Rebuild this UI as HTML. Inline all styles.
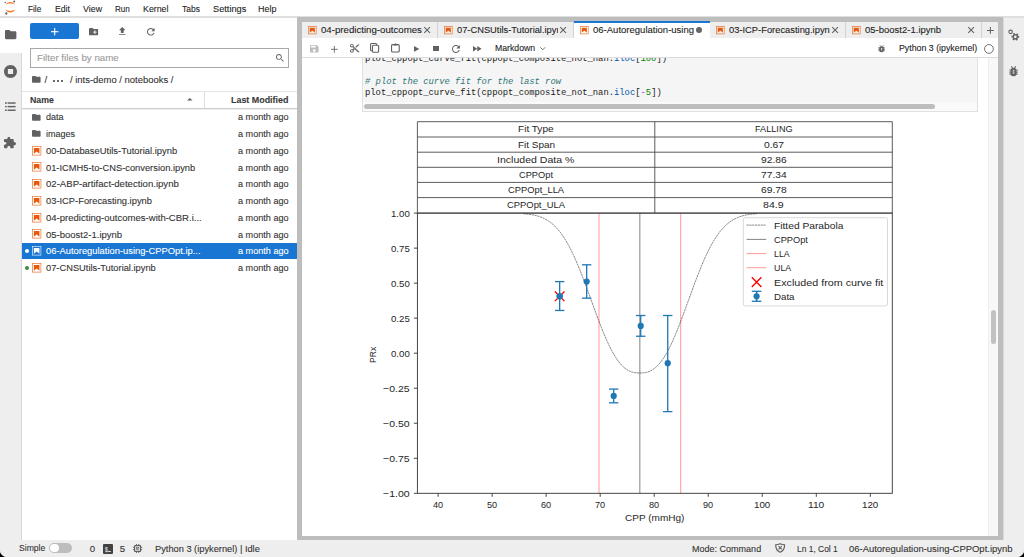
<!DOCTYPE html><html><head><meta charset="utf-8"><title>JupyterLab</title><style>
*{margin:0;padding:0;box-sizing:border-box}
html,body{width:1024px;height:557px;overflow:hidden;background:#000;font-family:"Liberation Sans",sans-serif}
#win{position:absolute;left:0;top:0;width:1024px;height:557px;background:#fff;border-radius:0 0 7px 7px;overflow:hidden}
.t{position:absolute;white-space:nowrap;line-height:0;-webkit-text-stroke:0.1px currentColor}
svg{position:absolute;overflow:visible}
</style></head><body><div id="win">
<div style="position:absolute;left:0px;top:0px;width:1024px;height:17px;background:#fff"></div>
<div style="position:absolute;left:0px;top:16.4px;width:1024px;height:1.4px;background:#dfdfdf"></div>
<div class="t" style="left:28.30px;top:8.70px;font-size:9.7px;color:#1e1e1e;font-family:'Liberation Sans',sans-serif;transform:scaleX(0.8511);transform-origin:0 0;">File</div>
<div class="t" style="left:54.90px;top:8.70px;font-size:9.7px;color:#1e1e1e;font-family:'Liberation Sans',sans-serif;transform:scaleX(0.8915);transform-origin:0 0;">Edit</div>
<div class="t" style="left:82.80px;top:8.70px;font-size:9.7px;color:#1e1e1e;font-family:'Liberation Sans',sans-serif;transform:scaleX(0.9150);transform-origin:0 0;">View</div>
<div class="t" style="left:115.00px;top:8.70px;font-size:9.7px;color:#1e1e1e;font-family:'Liberation Sans',sans-serif;transform:scaleX(0.8319);transform-origin:0 0;">Run</div>
<div class="t" style="left:142.80px;top:8.70px;font-size:9.7px;color:#1e1e1e;font-family:'Liberation Sans',sans-serif;transform:scaleX(0.9093);transform-origin:0 0;">Kernel</div>
<div class="t" style="left:181.60px;top:8.70px;font-size:9.7px;color:#1e1e1e;font-family:'Liberation Sans',sans-serif;transform:scaleX(0.8738);transform-origin:0 0;">Tabs</div>
<div class="t" style="left:212.50px;top:8.70px;font-size:9.7px;color:#1e1e1e;font-family:'Liberation Sans',sans-serif;transform:scaleX(0.9530);transform-origin:0 0;">Settings</div>
<div class="t" style="left:258.40px;top:8.70px;font-size:9.7px;color:#1e1e1e;font-family:'Liberation Sans',sans-serif;transform:scaleX(0.9272);transform-origin:0 0;">Help</div>
<svg style="left:0px;top:0px" width="24" height="17" viewBox="0 0 24 17" preserveAspectRatio="none"><path d="M5.4 4.9 C7.2 0.9 13.4 0.9 15.2 4.9 C12.8 3.0 7.8 3.0 5.4 4.9Z" fill="#f37726"/><path d="M5.4 9.6 C7.2 13.6 13.4 13.6 15.2 9.6 C12.8 11.5 7.8 11.5 5.4 9.6Z" fill="#f37726"/><circle cx="14.2" cy="1.5" r="1.0" fill="#616161"/><circle cx="5.3" cy="2.4" r="0.7" fill="#616161"/><circle cx="6.3" cy="13.5" r="1.15" fill="#616161"/></svg>
<div style="position:absolute;left:0px;top:17px;width:22px;height:523px;background:#eee"></div>
<div style="position:absolute;left:21px;top:53px;width:0.9px;height:487px;background:#d9d9d9"></div>
<div style="position:absolute;left:0px;top:17.1px;width:22px;height:36px;background:#fff"></div>
<svg style="left:4.6px;top:29.8px" width="11.4" height="9.2" viewBox="2 4 20 16" preserveAspectRatio="none"><path d="M10 4H4c-1.1 0-2 .9-2 2v12c0 1.1.9 2 2 2h16c1.1 0 2-.9 2-2V8c0-1.1-.9-2-2-2h-8l-2-2z" fill="#616161"/></svg>
<svg style="left:3.6px;top:64.5px" width="13" height="13" viewBox="2 2 20 20" preserveAspectRatio="none"><path d="M12 2C6.48 2 2 6.48 2 12s4.48 10 10 10 10-4.48 10-10S17.52 2 12 2zm4 14H8V8h8v8z" fill="#616161"/></svg>
<svg style="left:4.6px;top:102.4px" width="10.6" height="9.2" viewBox="0 0 10.6 9.2" preserveAspectRatio="none"><circle cx="0.9" cy="1.0" r="0.9" fill="#616161"/><circle cx="0.9" cy="4.6" r="0.9" fill="#616161"/><circle cx="0.9" cy="8.2" r="0.9" fill="#616161"/><rect x="2.6" y="0.3" width="8" height="1.45" fill="#616161"/><rect x="2.6" y="3.9" width="8" height="1.45" fill="#616161"/><rect x="2.6" y="7.5" width="8" height="1.45" fill="#616161"/></svg>
<svg style="left:4.4px;top:137px" width="12" height="11.2" viewBox="2 0 21 22" preserveAspectRatio="none"><path d="M20.5 10H19V6c0-1.1-.9-2-2-2h-4V2.5C13 1.12 11.88 0 10.5 0S8 1.12 8 2.5V4H4c-1.1 0-1.99.9-1.99 2v3.8H3.5c1.49 0 2.7 1.21 2.7 2.7s-1.21 2.7-2.7 2.7H2V20c0 1.1.9 2 2 2h3.8v-1.5c0-1.49 1.21-2.7 2.7-2.7 1.49 0 2.7 1.21 2.7 2.7V22H17c1.1 0 2-.9 2-2v-4h1.5c1.38 0 2.5-1.12 2.5-2.5S21.88 10 20.5 10z" fill="#616161"/></svg>
<div style="position:absolute;left:22px;top:17.1px;width:275px;height:523px;background:#fff"></div>
<div style="position:absolute;left:30px;top:23px;width:48.6px;height:16px;background:#1976d2;border-radius:2px"></div>
<svg style="left:50.5px;top:27.5px" width="7.4" height="7.4" viewBox="0 0 8 8" preserveAspectRatio="none"><rect x="3.4" y="0" width="1.2" height="8" fill="#fff"/><rect x="0" y="3.4" width="8" height="1.2" fill="#fff"/></svg>
<svg style="left:89px;top:27.7px" width="9.1" height="7.3" viewBox="2 4 20 16" preserveAspectRatio="none"><path d="M20 6h-8l-2-2H4c-1.1 0-2 .9-2 2v12c0 1.1.9 2 2 2h16c1.1 0 2-.9 2-2V8c0-1.1-.9-2-2-2zm-1 8h-3v3h-2v-3h-3v-2h3V9h2v3h3v2z" fill="#616161"/></svg>
<svg style="left:118.7px;top:27.4px" width="6.5" height="7.8" viewBox="5 3 14 17" preserveAspectRatio="none"><path d="M9 16h6v-6h4l-7-7-7 7h4zm-4 2h14v2H5z" fill="#616161"/></svg>
<svg style="left:146.8px;top:27.6px" width="7.6" height="7.6" viewBox="4 4 16 16" preserveAspectRatio="none"><path d="M17.65 6.35C16.2 4.9 14.21 4 12 4c-4.42 0-7.99 3.58-7.99 8s3.57 8 7.99 8c3.73 0 6.84-2.55 7.73-6h-2.08c-.82 2.33-3.04 4-5.65 4-3.31 0-6-2.69-6-6s2.69-6 6-6c1.66 0 3.14.69 4.22 1.78L13 11h7V4l-2.35 2.35z" fill="#616161"/></svg>
<div style="position:absolute;left:30px;top:48.2px;width:259px;height:20.3px;border:0.9px solid #a8a8a8;background:#fff"></div>
<div class="t" style="left:36.90px;top:57.70px;font-size:9.6px;color:#9a9a9a;font-family:'Liberation Sans',sans-serif;transform:scaleX(1.0154);transform-origin:0 0;">Filter files by name</div>
<svg style="left:275.6px;top:53.6px" width="8" height="8" viewBox="3 3 18 18" preserveAspectRatio="none"><path d="M15.5 14h-.79l-.28-.27C15.41 12.59 16 11.11 16 9.5 16 5.91 13.09 3 9.5 3S3 5.91 3 9.5 5.91 16 9.5 16c1.61 0 3.09-.59 4.23-1.57l.27.28v.79l5 4.99L20.49 19l-4.99-5zm-6 0C7.01 14 5 11.99 5 9.5S7.01 5 9.5 5 14 7.01 14 9.5 11.99 14 9.5 14z" fill="#616161"/></svg>
<svg style="left:32.2px;top:76.4px" width="8.6" height="6.8" viewBox="2 4 20 16" preserveAspectRatio="none"><path d="M10 4H4c-1.1 0-2 .9-2 2v12c0 1.1.9 2 2 2h16c1.1 0 2-.9 2-2V8c0-1.1-.9-2-2-2h-8l-2-2z" fill="#616161"/></svg>
<div class="t" style="left:44.60px;top:79.70px;font-size:9.6px;color:#333;font-family:'Liberation Sans',sans-serif;">/</div>
<div style="position:absolute;left:53.4px;top:79.5px;width:2.0px;height:2.0px;background:#3a3a3a;border-radius:50%"></div>
<div style="position:absolute;left:57.2px;top:79.5px;width:2.0px;height:2.0px;background:#3a3a3a;border-radius:50%"></div>
<div style="position:absolute;left:61.0px;top:79.5px;width:2.0px;height:2.0px;background:#3a3a3a;border-radius:50%"></div>
<div class="t" style="left:69.50px;top:79.70px;font-size:9.6px;color:#333;font-family:'Liberation Sans',sans-serif;transform:scaleX(0.9846);transform-origin:0 0;">/ ints-demo / notebooks /</div>
<div style="position:absolute;left:22px;top:91.2px;width:275px;height:0.9px;background:#e6e6e6"></div>
<div class="t" style="left:30.40px;top:99.70px;font-size:9.7px;color:#3a3a3a;font-family:'Liberation Sans',sans-serif;font-weight:bold;transform:scaleX(0.9045);transform-origin:0 0;">Name</div>
<svg style="left:186.6px;top:98.3px" width="5.6" height="2.6" viewBox="0 0 5.6 2.6" preserveAspectRatio="none"><path d="M0 2.6L2.8 0L5.6 2.6Z" fill="#616161"/></svg>
<div style="position:absolute;left:204.4px;top:91.5px;width:0.9px;height:16.5px;background:#e0e0e0"></div>
<div class="t" style="left:231.40px;top:99.70px;font-size:9.7px;color:#3a3a3a;font-family:'Liberation Sans',sans-serif;font-weight:bold;transform:scaleX(0.9199);transform-origin:0 0;">Last Modified</div>
<div style="position:absolute;left:22px;top:107.5px;width:275px;height:1px;background:#cccccc"></div>
<div style="position:absolute;left:22px;top:108.5px;width:275px;height:1px;background:#f0f0f0"></div>
<svg style="left:32.3px;top:113.6px" width="8.6" height="6.8" viewBox="2 4 20 16" preserveAspectRatio="none"><path d="M10 4H4c-1.1 0-2 .9-2 2v12c0 1.1.9 2 2 2h16c1.1 0 2-.9 2-2V8c0-1.1-.9-2-2-2h-8l-2-2z" fill="#616161"/></svg>
<div class="t" style="left:46.40px;top:116.70px;font-size:9.7px;color:#333;font-family:'Liberation Sans',sans-serif;transform:scaleX(0.9319);transform-origin:0 0;">data</div>
<div class="t" style="left:238.00px;top:116.70px;font-size:9.7px;color:#333;font-family:'Liberation Sans',sans-serif;transform:scaleX(0.9401);transform-origin:0 0;">a month ago</div>
<svg style="left:32.3px;top:130.35px" width="8.6" height="6.8" viewBox="2 4 20 16" preserveAspectRatio="none"><path d="M10 4H4c-1.1 0-2 .9-2 2v12c0 1.1.9 2 2 2h16c1.1 0 2-.9 2-2V8c0-1.1-.9-2-2-2h-8l-2-2z" fill="#616161"/></svg>
<div class="t" style="left:46.40px;top:133.70px;font-size:9.7px;color:#333;font-family:'Liberation Sans',sans-serif;transform:scaleX(0.9273);transform-origin:0 0;">images</div>
<div class="t" style="left:238.00px;top:133.70px;font-size:9.7px;color:#333;font-family:'Liberation Sans',sans-serif;transform:scaleX(0.9401);transform-origin:0 0;">a month ago</div>
<svg style="left:31.9px;top:145.7px" width="9.3" height="9.6" viewBox="1.8 1.8 18.4 18.4" preserveAspectRatio="none"><path d="M18.7 3.3v15.4H3.3V3.3h15.4m1.5-1.5H1.8v18.3h18.3l.1-18.3z" fill="#e8590c" opacity="0.8"/><path d="M16.5 16.5l-5.4-4.3-5.6 4.3v-11h11z" fill="#e8590c"/></svg>
<div class="t" style="left:46.40px;top:150.70px;font-size:9.7px;color:#333;font-family:'Liberation Sans',sans-serif;transform:scaleX(0.9690);transform-origin:0 0;">00-DatabaseUtils-Tutorial.ipynb</div>
<div class="t" style="left:238.00px;top:150.70px;font-size:9.7px;color:#333;font-family:'Liberation Sans',sans-serif;transform:scaleX(0.9401);transform-origin:0 0;">a month ago</div>
<svg style="left:31.9px;top:162.45px" width="9.3" height="9.6" viewBox="1.8 1.8 18.4 18.4" preserveAspectRatio="none"><path d="M18.7 3.3v15.4H3.3V3.3h15.4m1.5-1.5H1.8v18.3h18.3l.1-18.3z" fill="#e8590c" opacity="0.8"/><path d="M16.5 16.5l-5.4-4.3-5.6 4.3v-11h11z" fill="#e8590c"/></svg>
<div class="t" style="left:46.40px;top:167.70px;font-size:9.7px;color:#333;font-family:'Liberation Sans',sans-serif;transform:scaleX(0.9623);transform-origin:0 0;">01-ICMH5-to-CNS-conversion.ipynb</div>
<div class="t" style="left:238.00px;top:167.70px;font-size:9.7px;color:#333;font-family:'Liberation Sans',sans-serif;transform:scaleX(0.9401);transform-origin:0 0;">a month ago</div>
<svg style="left:31.9px;top:179.2px" width="9.3" height="9.6" viewBox="1.8 1.8 18.4 18.4" preserveAspectRatio="none"><path d="M18.7 3.3v15.4H3.3V3.3h15.4m1.5-1.5H1.8v18.3h18.3l.1-18.3z" fill="#e8590c" opacity="0.8"/><path d="M16.5 16.5l-5.4-4.3-5.6 4.3v-11h11z" fill="#e8590c"/></svg>
<div class="t" style="left:46.40px;top:183.70px;font-size:9.7px;color:#333;font-family:'Liberation Sans',sans-serif;transform:scaleX(0.9907);transform-origin:0 0;">02-ABP-artifact-detection.ipynb</div>
<div class="t" style="left:238.00px;top:183.70px;font-size:9.7px;color:#333;font-family:'Liberation Sans',sans-serif;transform:scaleX(0.9401);transform-origin:0 0;">a month ago</div>
<svg style="left:31.9px;top:195.95px" width="9.3" height="9.6" viewBox="1.8 1.8 18.4 18.4" preserveAspectRatio="none"><path d="M18.7 3.3v15.4H3.3V3.3h15.4m1.5-1.5H1.8v18.3h18.3l.1-18.3z" fill="#e8590c" opacity="0.8"/><path d="M16.5 16.5l-5.4-4.3-5.6 4.3v-11h11z" fill="#e8590c"/></svg>
<div class="t" style="left:46.40px;top:200.70px;font-size:9.7px;color:#333;font-family:'Liberation Sans',sans-serif;transform:scaleX(0.9647);transform-origin:0 0;">03-ICP-Forecasting.ipynb</div>
<div class="t" style="left:238.00px;top:200.70px;font-size:9.7px;color:#333;font-family:'Liberation Sans',sans-serif;transform:scaleX(0.9401);transform-origin:0 0;">a month ago</div>
<svg style="left:31.9px;top:212.7px" width="9.3" height="9.6" viewBox="1.8 1.8 18.4 18.4" preserveAspectRatio="none"><path d="M18.7 3.3v15.4H3.3V3.3h15.4m1.5-1.5H1.8v18.3h18.3l.1-18.3z" fill="#e8590c" opacity="0.8"/><path d="M16.5 16.5l-5.4-4.3-5.6 4.3v-11h11z" fill="#e8590c"/></svg>
<div class="t" style="left:46.40px;top:217.70px;font-size:9.7px;color:#333;font-family:'Liberation Sans',sans-serif;transform:scaleX(0.9837);transform-origin:0 0;">04-predicting-outcomes-with-CBR.i...</div>
<div class="t" style="left:238.00px;top:217.70px;font-size:9.7px;color:#333;font-family:'Liberation Sans',sans-serif;transform:scaleX(0.9401);transform-origin:0 0;">a month ago</div>
<svg style="left:31.9px;top:229.45px" width="9.3" height="9.6" viewBox="1.8 1.8 18.4 18.4" preserveAspectRatio="none"><path d="M18.7 3.3v15.4H3.3V3.3h15.4m1.5-1.5H1.8v18.3h18.3l.1-18.3z" fill="#e8590c" opacity="0.8"/><path d="M16.5 16.5l-5.4-4.3-5.6 4.3v-11h11z" fill="#e8590c"/></svg>
<div class="t" style="left:46.40px;top:234.70px;font-size:9.7px;color:#333;font-family:'Liberation Sans',sans-serif;transform:scaleX(0.9813);transform-origin:0 0;">05-boost2-1.ipynb</div>
<div class="t" style="left:238.00px;top:234.70px;font-size:9.7px;color:#333;font-family:'Liberation Sans',sans-serif;transform:scaleX(0.9401);transform-origin:0 0;">a month ago</div>
<div style="position:absolute;left:22px;top:242.7px;width:275px;height:16.6px;background:#1976d2"></div>
<div style="position:absolute;left:24.9px;top:248.9px;width:4.2px;height:4.2px;background:#fff;border-radius:50%"></div>
<svg style="left:31.9px;top:246.2px" width="9.3" height="9.6" viewBox="1.8 1.8 18.4 18.4" preserveAspectRatio="none"><path d="M18.7 3.3v15.4H3.3V3.3h15.4m1.5-1.5H1.8v18.3h18.3l.1-18.3z" fill="#fff" opacity="0.8"/><path d="M16.5 16.5l-5.4-4.3-5.6 4.3v-11h11z" fill="#fff"/></svg>
<div class="t" style="left:46.40px;top:250.70px;font-size:9.7px;color:#fff;font-family:'Liberation Sans',sans-serif;transform:scaleX(0.9660);transform-origin:0 0;">06-Autoregulation-using-CPPOpt.ip...</div>
<div class="t" style="left:238.00px;top:250.70px;font-size:9.7px;color:#fff;font-family:'Liberation Sans',sans-serif;transform:scaleX(0.9401);transform-origin:0 0;">a month ago</div>
<div style="position:absolute;left:24.9px;top:265.65px;width:4.2px;height:4.2px;background:#388e3c;border-radius:50%"></div>
<svg style="left:31.9px;top:262.95px" width="9.3" height="9.6" viewBox="1.8 1.8 18.4 18.4" preserveAspectRatio="none"><path d="M18.7 3.3v15.4H3.3V3.3h15.4m1.5-1.5H1.8v18.3h18.3l.1-18.3z" fill="#e8590c" opacity="0.8"/><path d="M16.5 16.5l-5.4-4.3-5.6 4.3v-11h11z" fill="#e8590c"/></svg>
<div class="t" style="left:46.40px;top:267.70px;font-size:9.7px;color:#333;font-family:'Liberation Sans',sans-serif;transform:scaleX(0.9602);transform-origin:0 0;">07-CNSUtils-Tutorial.ipynb</div>
<div class="t" style="left:238.00px;top:267.70px;font-size:9.7px;color:#333;font-family:'Liberation Sans',sans-serif;transform:scaleX(0.9401);transform-origin:0 0;">a month ago</div>
<div style="position:absolute;left:297px;top:17.1px;width:706px;height:523px;background:#bdbdbd"></div>
<div style="position:absolute;left:1003px;top:17.1px;width:21px;height:523px;background:#eee"></div>
<div style="position:absolute;left:1003px;top:17.1px;width:0.9px;height:523px;background:#d9d9d9"></div>
<svg style="left:1004px;top:26px" width="18" height="18" viewBox="0 0 18 18" preserveAspectRatio="none"><circle cx="6.6" cy="5.8" r="1.75" fill="none" stroke="#616161" stroke-width="1.15"/><circle cx="11.3" cy="10.8" r="2.15" fill="none" stroke="#616161" stroke-width="1.5"/><circle cx="11.3" cy="10.8" r="3.25" fill="none" stroke="#616161" stroke-width="1.3" stroke-dasharray="1.7 1.7" transform="rotate(-15 11.3 10.8)"/></svg>
<svg style="left:1009.2px;top:65.6px" width="9.1" height="10.6" viewBox="0 0 10 11" preserveAspectRatio="none"><path d="M2.6 0.3L3.9 2.2M7.4 0.3L6.1 2.2" stroke="#616161" stroke-width="1.1"/><path d="M0.4 4.2H9.6M0.4 6.3H9.6M0.6 8.4H9.4" stroke="#616161" stroke-width="1.2"/><rect x="1.9" y="1.8" width="6.2" height="8.9" rx="2.6" fill="#616161"/><rect x="4.1" y="4.4" width="1.8" height="1.3" fill="#eee"/><rect x="4.1" y="6.6" width="1.8" height="1.3" fill="#eee"/></svg>
<div style="position:absolute;left:302px;top:22px;width:696px;height:16.6px;background:#eeeeee"></div>
<div style="position:absolute;left:437.2px;top:22px;width:0.9px;height:16.6px;background:#d2d2d2"></div>
<div style="position:absolute;left:302px;top:37.7px;width:136px;height:0.9px;background:#dcdcdc"></div>
<svg style="left:308.3px;top:25.8px" width="8.6" height="8.2" viewBox="1.8 1.8 18.4 18.4" preserveAspectRatio="none"><path d="M18.7 3.3v15.4H3.3V3.3h15.4m1.5-1.5H1.8v18.3h18.3l.1-18.3z" fill="#e8590c" opacity="0.8"/><path d="M16.5 16.5l-5.4-4.3-5.6 4.3v-11h11z" fill="#e8590c"/></svg>
<div style="position:absolute;left:318px;top:22px;width:103.8px;height:16px;overflow:hidden">
<div class="t" style="left:2.50px;top:7.70px;font-size:9.7px;color:#1e1e1e;font-family:'Liberation Sans',sans-serif;transform:scaleX(0.9964);transform-origin:0 0;">04-predicting-outcomes</div>
</div>
<svg style="left:423.8px;top:27px" width="6.2" height="6" viewBox="0 0 6 6" preserveAspectRatio="none"><path d="M0.2 0.2L5.8 5.8M5.8 0.2L0.2 5.8" stroke="#616161" stroke-width="1.05"/></svg>
<div style="position:absolute;left:573.2px;top:22px;width:0.9px;height:16.6px;background:#d2d2d2"></div>
<div style="position:absolute;left:438px;top:37.7px;width:136px;height:0.9px;background:#dcdcdc"></div>
<svg style="left:444.3px;top:25.8px" width="8.6" height="8.2" viewBox="1.8 1.8 18.4 18.4" preserveAspectRatio="none"><path d="M18.7 3.3v15.4H3.3V3.3h15.4m1.5-1.5H1.8v18.3h18.3l.1-18.3z" fill="#e8590c" opacity="0.8"/><path d="M16.5 16.5l-5.4-4.3-5.6 4.3v-11h11z" fill="#e8590c"/></svg>
<div style="position:absolute;left:454px;top:22px;width:103.8px;height:16px;overflow:hidden">
<div class="t" style="left:2.50px;top:7.70px;font-size:9.7px;color:#1e1e1e;font-family:'Liberation Sans',sans-serif;transform:scaleX(0.9602);transform-origin:0 0;">07-CNSUtils-Tutorial.ipynb</div>
</div>
<svg style="left:559.8px;top:27px" width="6.2" height="6" viewBox="0 0 6 6" preserveAspectRatio="none"><path d="M0.2 0.2L5.8 5.8M5.8 0.2L0.2 5.8" stroke="#616161" stroke-width="1.05"/></svg>
<div style="position:absolute;left:574px;top:22px;width:136px;height:16.6px;background:#fff"></div>
<div style="position:absolute;left:574px;top:21.4px;width:136px;height:1.8px;background:#1976d2"></div>
<svg style="left:580.3px;top:25.8px" width="8.6" height="8.2" viewBox="1.8 1.8 18.4 18.4" preserveAspectRatio="none"><path d="M18.7 3.3v15.4H3.3V3.3h15.4m1.5-1.5H1.8v18.3h18.3l.1-18.3z" fill="#e8590c" opacity="0.8"/><path d="M16.5 16.5l-5.4-4.3-5.6 4.3v-11h11z" fill="#e8590c"/></svg>
<div style="position:absolute;left:590px;top:22px;width:103.8px;height:16px;overflow:hidden">
<div class="t" style="left:2.50px;top:7.70px;font-size:9.7px;color:#1e1e1e;font-family:'Liberation Sans',sans-serif;transform:scaleX(0.9826);transform-origin:0 0;">06-Autoregulation-using</div>
</div>
<div style="position:absolute;left:695.9px;top:27.3px;width:6.2px;height:6.2px;background:#666;border-radius:50%"></div>
<div style="position:absolute;left:845.2px;top:22px;width:0.9px;height:16.6px;background:#d2d2d2"></div>
<div style="position:absolute;left:710px;top:37.7px;width:136px;height:0.9px;background:#dcdcdc"></div>
<svg style="left:716.3px;top:25.8px" width="8.6" height="8.2" viewBox="1.8 1.8 18.4 18.4" preserveAspectRatio="none"><path d="M18.7 3.3v15.4H3.3V3.3h15.4m1.5-1.5H1.8v18.3h18.3l.1-18.3z" fill="#e8590c" opacity="0.8"/><path d="M16.5 16.5l-5.4-4.3-5.6 4.3v-11h11z" fill="#e8590c"/></svg>
<div style="position:absolute;left:726px;top:22px;width:103.8px;height:16px;overflow:hidden">
<div class="t" style="left:2.50px;top:7.70px;font-size:9.7px;color:#1e1e1e;font-family:'Liberation Sans',sans-serif;transform:scaleX(0.9647);transform-origin:0 0;">03-ICP-Forecasting.ipynb</div>
</div>
<svg style="left:831.8px;top:27px" width="6.2" height="6" viewBox="0 0 6 6" preserveAspectRatio="none"><path d="M0.2 0.2L5.8 5.8M5.8 0.2L0.2 5.8" stroke="#616161" stroke-width="1.05"/></svg>
<div style="position:absolute;left:981.2px;top:22px;width:0.9px;height:16.6px;background:#d2d2d2"></div>
<div style="position:absolute;left:846px;top:37.7px;width:136px;height:0.9px;background:#dcdcdc"></div>
<svg style="left:852.3px;top:25.8px" width="8.6" height="8.2" viewBox="1.8 1.8 18.4 18.4" preserveAspectRatio="none"><path d="M18.7 3.3v15.4H3.3V3.3h15.4m1.5-1.5H1.8v18.3h18.3l.1-18.3z" fill="#e8590c" opacity="0.8"/><path d="M16.5 16.5l-5.4-4.3-5.6 4.3v-11h11z" fill="#e8590c"/></svg>
<div style="position:absolute;left:862px;top:22px;width:103.8px;height:16px;overflow:hidden">
<div class="t" style="left:2.50px;top:7.70px;font-size:9.7px;color:#1e1e1e;font-family:'Liberation Sans',sans-serif;transform:scaleX(0.9813);transform-origin:0 0;">05-boost2-1.ipynb</div>
</div>
<svg style="left:967.8px;top:27px" width="6.2" height="6" viewBox="0 0 6 6" preserveAspectRatio="none"><path d="M0.2 0.2L5.8 5.8M5.8 0.2L0.2 5.8" stroke="#616161" stroke-width="1.05"/></svg>
<div style="position:absolute;left:981.3px;top:22px;width:0.9px;height:16.6px;background:#d2d2d2"></div>
<svg style="left:986.8px;top:26.9px" width="6.8" height="6.8" viewBox="0 0 7 7" preserveAspectRatio="none"><path d="M3.5 0V7M0 3.5H7" stroke="#616161" stroke-width="1.05"/></svg>
<div style="position:absolute;left:302px;top:38px;width:696px;height:498px;background:#fff"></div>
<div style="position:absolute;left:302px;top:57.5px;width:696px;height:478.5px;overflow:hidden">
<div style="position:absolute;left:59.60000000000002px;top:-37.5px;width:616.3px;height:91.8px;background:#f5f5f5;border:0.9px solid #e0e0e0"></div>
<div style="position:absolute;left:60.5px;top:44.099999999999994px;width:614.5px;height:9.4px;background:#fafafa"></div>
<div style="position:absolute;left:62.39999999999998px;top:46.099999999999994px;width:570.8px;height:5.3px;background:#bdbdbd;border-radius:3px"></div>
<div class="t" style="left:63.00px;top:1.20px;font-size:8.83px;color:#000;font-family:'Liberation Mono',monospace;-webkit-text-stroke:0;"><span style="color:#1a1a1a;">plot_cppopt_curve_fit(cppopt_composite_not_nan.</span><span style="color:#0055aa;">iloc</span><span style="color:#212121;">[</span><span style="color:#008000;">100</span><span style="color:#212121;">])</span></div>
<div class="t" style="left:63.00px;top:24.20px;font-size:8.83px;color:#000;font-family:'Liberation Mono',monospace;-webkit-text-stroke:0;"><span style="color:#2f7575;font-style:italic;"># plot the curve fit for the last row</span></div>
<div class="t" style="left:63.00px;top:35.20px;font-size:8.83px;color:#000;font-family:'Liberation Mono',monospace;-webkit-text-stroke:0;"><span style="color:#1a1a1a;">plot_cppopt_curve_fit(cppopt_composite_not_nan.</span><span style="color:#0055aa;">iloc</span><span style="color:#212121;">[</span><span style="color:#aa22ff;">-</span><span style="color:#008000;">5</span><span style="color:#212121;">])</span></div>
</div>
<div style="position:absolute;left:988.1px;top:57.5px;width:9.9px;height:478.5px;background:#f8f8f8;border-left:0.6px solid #efefef"></div>
<div style="position:absolute;left:990.8px;top:310.2px;width:5.4px;height:33.8px;background:#c1c1c1;border-radius:3px"></div>
<div style="position:absolute;left:302px;top:38.6px;width:696px;height:18.2px;background:#fff"></div>
<div style="position:absolute;left:302px;top:56.6px;width:696px;height:0.9px;background:#dcdcdc"></div>
<svg style="left:309.6px;top:45px" width="8.6" height="7.6" viewBox="3 3 18 18" preserveAspectRatio="none"><path d="M17 3H5c-1.11 0-2 .9-2 2v14c0 1.1.89 2 2 2h14c1.1 0 2-.9 2-2V7l-4-4zm-5 16c-1.66 0-3-1.34-3-3s1.34-3 3-3 3 1.34 3 3-1.34 3-3 3zm3-10H5V5h10v4z" fill="#bdbdbd"/></svg>
<svg style="left:331px;top:45.5px" width="6.7" height="6.7" viewBox="0 0 7 7" preserveAspectRatio="none"><path d="M3.5 0V7M0 3.5H7" stroke="#616161" stroke-width="0.9"/></svg>
<svg style="left:349.8px;top:44.4px" width="9.4" height="8.6" viewBox="2 2 20 20" preserveAspectRatio="none"><path d="M9.64 7.64c.23-.5.36-1.05.36-1.64 0-2.21-1.79-4-4-4S2 3.79 2 6s1.79 4 4 4c.59 0 1.14-.13 1.64-.36L10 12l-2.36 2.36C7.14 14.13 6.59 14 6 14c-2.21 0-4 1.79-4 4s1.79 4 4 4 4-1.79 4-4c0-.59-.13-1.14-.36-1.64L12 14l7 7h3v-1L9.64 7.64zM6 8c-1.1 0-2-.89-2-2s.9-2 2-2 2 .89 2 2-.9 2-2 2zm0 12c-1.1 0-2-.89-2-2s.9-2 2-2 2 .89 2 2-.9 2-2 2zm6-7.5c-.28 0-.5-.22-.5-.5s.22-.5.5-.5.5.22.5.5-.22.5-.5.5zM19 3l-6 6 2 2 7-7V3z" fill="#616161"/></svg>
<svg style="left:370.1px;top:43.4px" width="9.2" height="9.8" viewBox="0 0 9.2 9.8" preserveAspectRatio="none"><rect x="0.55" y="0.55" width="6.2" height="7.2" rx="1" fill="#fff" stroke="#616161" stroke-width="1.1"/><rect x="2.5" y="2.2" width="6.15" height="7.05" rx="1" fill="#fff" stroke="#616161" stroke-width="1.1"/></svg>
<svg style="left:391.2px;top:43.2px" width="8.8" height="9.6" viewBox="0 0 8.8 9.6" preserveAspectRatio="none"><rect x="0.55" y="1.6" width="7.7" height="7.45" rx="1" fill="none" stroke="#616161" stroke-width="1.1"/><path d="M2.5 2.6V1.6H3.5Q3.8 0.3 4.4 0.3Q5 0.3 5.3 1.6H6.3V2.6Z" fill="#616161"/></svg>
<svg style="left:413.8px;top:45.5px" width="5.3" height="5.8" viewBox="0 0 5.3 5.8" preserveAspectRatio="none"><path d="M0 0L5.3 2.9L0 5.8Z" fill="#616161"/></svg>
<div style="position:absolute;left:433.4px;top:45.8px;width:5.6px;height:5.5px;background:#616161"></div>
<svg style="left:452.3px;top:45.2px" width="7.9" height="7.9" viewBox="4 4 16 16" preserveAspectRatio="none"><path d="M17.65 6.35C16.2 4.9 14.21 4 12 4c-4.42 0-7.99 3.58-7.99 8s3.57 8 7.99 8c3.73 0 6.84-2.55 7.73-6h-2.08c-.82 2.33-3.04 4-5.65 4-3.31 0-6-2.69-6-6s2.69-6 6-6c1.66 0 3.14.69 4.22 1.78L13 11h7V4l-2.35 2.35z" fill="#616161"/></svg>
<svg style="left:472.7px;top:45.8px" width="8.6" height="5.5" viewBox="0 0 8.6 5.5" preserveAspectRatio="none"><path d="M0 0L4.3 2.75L0 5.5ZM4.3 0L8.6 2.75L4.3 5.5Z" fill="#616161"/></svg>
<div class="t" style="left:494.60px;top:47.70px;font-size:9.6px;color:#222;font-family:'Liberation Sans',sans-serif;transform:scaleX(0.9055);transform-origin:0 0;">Markdown</div>
<svg style="left:539.8px;top:47.4px" width="5.5" height="3.2" viewBox="0 0 5.5 3.2" preserveAspectRatio="none"><path d="M0.3 0.3L2.75 2.8L5.2 0.3" fill="none" stroke="#616161" stroke-width="0.9"/></svg>
<svg style="left:878.3px;top:44.6px" width="7.2" height="7.4" viewBox="0 0 10 11" preserveAspectRatio="none"><path d="M2.6 0.3L3.9 2.2M7.4 0.3L6.1 2.2" stroke="#616161" stroke-width="1.1"/><path d="M0.4 4.2H9.6M0.4 6.3H9.6M0.6 8.4H9.4" stroke="#616161" stroke-width="1.2"/><rect x="1.9" y="1.8" width="6.2" height="8.9" rx="2.6" fill="#616161"/><rect x="4.1" y="4.4" width="1.8" height="1.3" fill="#fff"/><rect x="4.1" y="6.6" width="1.8" height="1.3" fill="#fff"/></svg>
<div class="t" style="left:898.70px;top:47.70px;font-size:9.6px;color:#222;font-family:'Liberation Sans',sans-serif;transform:scaleX(0.9172);transform-origin:0 0;">Python 3 (ipykernel)</div>
<svg style="left:983.8px;top:43.8px" width="9.9" height="9.9" viewBox="0 0 10 10" preserveAspectRatio="none"><circle cx="5" cy="5" r="4.45" fill="none" stroke="#616161" stroke-width="0.9"/></svg>
<svg style="left:0px;top:0px" width="1024" height="557" viewBox="0 0 1024 557" preserveAspectRatio="none"><line x1="417.4" y1="121.7" x2="892.3" y2="121.7" stroke="#4a4a4a" stroke-width="0.9"/><line x1="417.4" y1="137.0" x2="892.3" y2="137.0" stroke="#4a4a4a" stroke-width="0.9"/><line x1="417.4" y1="152.2" x2="892.3" y2="152.2" stroke="#4a4a4a" stroke-width="0.9"/><line x1="417.4" y1="167.3" x2="892.3" y2="167.3" stroke="#4a4a4a" stroke-width="0.9"/><line x1="417.4" y1="182.4" x2="892.3" y2="182.4" stroke="#4a4a4a" stroke-width="0.9"/><line x1="417.4" y1="197.6" x2="892.3" y2="197.6" stroke="#4a4a4a" stroke-width="0.9"/><line x1="417.4" y1="213.1" x2="892.3" y2="213.1" stroke="#4a4a4a" stroke-width="0.9"/><line x1="417.4" y1="121.7" x2="417.4" y2="213.1" stroke="#4a4a4a" stroke-width="0.9"/><line x1="654.8" y1="121.7" x2="654.8" y2="213.1" stroke="#4a4a4a" stroke-width="0.9"/><line x1="892.3" y1="121.7" x2="892.3" y2="213.1" stroke="#4a4a4a" stroke-width="0.9"/><line x1="599.00" y1="213.1" x2="599.00" y2="493.3" stroke="#ff0000" stroke-opacity="0.45" stroke-width="0.9"/><line x1="680.69" y1="213.1" x2="680.69" y2="493.3" stroke="#ff0000" stroke-opacity="0.45" stroke-width="0.9"/><line x1="639.85" y1="213.1" x2="639.85" y2="493.3" stroke="#000" stroke-opacity="0.55" stroke-width="0.9"/><polyline points="523.47,213.71 524.55,213.80 525.63,213.89 526.71,214.00 527.79,214.12 528.87,214.25 529.95,214.40 531.03,214.57 532.11,214.75 533.19,214.95 534.27,215.18 535.35,215.42 536.43,215.69 537.52,215.99 538.60,216.32 539.68,216.67 540.76,217.06 541.84,217.49 542.92,217.95 544.00,218.45 545.08,218.99 546.16,219.57 547.24,220.20 548.32,220.88 549.40,221.62 550.48,222.40 551.56,223.24 552.64,224.14 553.72,225.10 554.80,226.12 555.89,227.21 556.97,228.36 558.05,229.58 559.13,230.87 560.21,232.24 561.29,233.67 562.37,235.19 563.45,236.77 564.53,238.43 565.61,240.17 566.69,241.99 567.77,243.88 568.85,245.85 569.93,247.90 571.01,250.02 572.09,252.21 573.18,254.48 574.26,256.81 575.34,259.22 576.42,261.69 577.50,264.23 578.58,266.82 579.66,269.47 580.74,272.18 581.82,274.93 582.90,277.73 583.98,280.57 585.06,283.45 586.14,286.36 587.22,289.29 588.30,292.25 589.38,295.22 590.46,298.19 591.55,301.18 592.63,304.16 593.71,307.13 594.79,310.09 595.87,313.03 596.95,315.95 598.03,318.84 599.11,321.69 600.19,324.49 601.27,327.25 602.35,329.96 603.43,332.61 604.51,335.20 605.59,337.72 606.67,340.17 607.75,342.54 608.83,344.84 609.92,347.05 611.00,349.18 612.08,351.22 613.16,353.17 614.24,355.03 615.32,356.79 616.40,358.45 617.48,360.02 618.56,361.50 619.64,362.87 620.72,364.15 621.80,365.33 622.88,366.41 623.96,367.40 625.04,368.30 626.12,369.10 627.21,369.82 628.29,370.45 629.37,371.00 630.45,371.47 631.53,371.86 632.61,372.19 633.69,372.45 634.77,372.64 635.85,372.78 636.93,372.88 638.01,372.93 639.09,372.95 640.17,372.95 641.25,372.94 642.33,372.90 643.41,372.83 644.49,372.71 645.58,372.53 646.66,372.30 647.74,372.00 648.82,371.64 649.90,371.20 650.98,370.68 652.06,370.08 653.14,369.40 654.22,368.63 655.30,367.77 656.38,366.82 657.46,365.77 658.54,364.63 659.62,363.39 660.70,362.06 661.78,360.62 662.86,359.09 663.95,357.47 665.03,355.74 666.11,353.92 667.19,352.01 668.27,350.01 669.35,347.92 670.43,345.74 671.51,343.47 672.59,341.13 673.67,338.71 674.75,336.22 675.83,333.65 676.91,331.03 677.99,328.34 679.07,325.60 680.15,322.81 681.24,319.98 682.32,317.11 683.40,314.20 684.48,311.27 685.56,308.32 686.64,305.35 687.72,302.37 688.80,299.39 689.88,296.41 690.96,293.43 692.04,290.47 693.12,287.53 694.20,284.61 695.28,281.72 696.36,278.87 697.44,276.05 698.52,273.28 699.61,270.55 700.69,267.88 701.77,265.26 702.85,262.70 703.93,260.20 705.01,257.77 706.09,255.40 707.17,253.11 708.25,250.89 709.33,248.74 710.41,246.66 711.49,244.66 712.57,242.74 713.65,240.89 714.73,239.12 715.81,237.43 716.89,235.81 717.98,234.27 719.06,232.80 720.14,231.41 721.22,230.09 722.30,228.84 723.38,227.66 724.46,226.55 725.54,225.50 726.62,224.52 727.70,223.59 728.78,222.73 729.86,221.92 730.94,221.17 732.02,220.47 733.10,219.82 734.18,219.22 735.27,218.66 736.35,218.14 737.43,217.66 738.51,217.23 739.59,216.82 740.67,216.46 741.75,216.12 742.83,215.81 743.91,215.53 744.99,215.27 746.07,215.04 747.15,214.83 748.23,214.64 749.31,214.47 750.39,214.31 751.47,214.17 752.55,214.05 753.64,213.94 754.72,213.84 755.80,213.75 756.88,213.67" fill="none" stroke="#000" stroke-opacity="0.75" stroke-width="0.65" stroke-dasharray="2.2 0.6"/><line x1="559.67" y1="281.61" x2="559.67" y2="310.47" stroke="#1f77b4" stroke-width="1.3"/><line x1="554.97" y1="281.61" x2="564.37" y2="281.61" stroke="#1f77b4" stroke-width="1.3"/><line x1="554.97" y1="310.47" x2="564.37" y2="310.47" stroke="#1f77b4" stroke-width="1.3"/><circle cx="559.67" cy="296.32" r="3.1" fill="#1f77b4"/><line x1="586.68" y1="264.80" x2="586.68" y2="298.14" stroke="#1f77b4" stroke-width="1.3"/><line x1="581.98" y1="264.80" x2="591.38" y2="264.80" stroke="#1f77b4" stroke-width="1.3"/><line x1="581.98" y1="298.14" x2="591.38" y2="298.14" stroke="#1f77b4" stroke-width="1.3"/><circle cx="586.68" cy="281.61" r="3.1" fill="#1f77b4"/><line x1="613.70" y1="389.07" x2="613.70" y2="402.80" stroke="#1f77b4" stroke-width="1.3"/><line x1="609.00" y1="389.07" x2="618.40" y2="389.07" stroke="#1f77b4" stroke-width="1.3"/><line x1="609.00" y1="402.80" x2="618.40" y2="402.80" stroke="#1f77b4" stroke-width="1.3"/><circle cx="613.70" cy="395.93" r="3.1" fill="#1f77b4"/><line x1="640.71" y1="315.51" x2="640.71" y2="336.25" stroke="#1f77b4" stroke-width="1.3"/><line x1="636.01" y1="315.51" x2="645.41" y2="315.51" stroke="#1f77b4" stroke-width="1.3"/><line x1="636.01" y1="336.25" x2="645.41" y2="336.25" stroke="#1f77b4" stroke-width="1.3"/><circle cx="640.71" cy="325.88" r="3.1" fill="#1f77b4"/><line x1="667.73" y1="315.51" x2="667.73" y2="411.62" stroke="#1f77b4" stroke-width="1.3"/><line x1="663.03" y1="315.51" x2="672.43" y2="315.51" stroke="#1f77b4" stroke-width="1.3"/><line x1="663.03" y1="411.62" x2="672.43" y2="411.62" stroke="#1f77b4" stroke-width="1.3"/><circle cx="667.73" cy="363.15" r="3.1" fill="#1f77b4"/><path d="M554.87 291.52L564.47 301.12M564.47 291.52L554.87 301.12" stroke="#ff0000" stroke-width="1.4"/><circle cx="559.67" cy="296.32" r="3.1" fill="#1f77b4"/><rect x="417.4" y="213.1" width="474.90" height="280.20" fill="none" stroke="#333" stroke-width="0.9"/><line x1="438.10" y1="493.3" x2="438.10" y2="496.8" stroke="#333" stroke-width="0.9"/><line x1="492.13" y1="493.3" x2="492.13" y2="496.8" stroke="#333" stroke-width="0.9"/><line x1="546.16" y1="493.3" x2="546.16" y2="496.8" stroke="#333" stroke-width="0.9"/><line x1="600.19" y1="493.3" x2="600.19" y2="496.8" stroke="#333" stroke-width="0.9"/><line x1="654.22" y1="493.3" x2="654.22" y2="496.8" stroke="#333" stroke-width="0.9"/><line x1="708.25" y1="493.3" x2="708.25" y2="496.8" stroke="#333" stroke-width="0.9"/><line x1="762.28" y1="493.3" x2="762.28" y2="496.8" stroke="#333" stroke-width="0.9"/><line x1="816.31" y1="493.3" x2="816.31" y2="496.8" stroke="#333" stroke-width="0.9"/><line x1="870.34" y1="493.3" x2="870.34" y2="496.8" stroke="#333" stroke-width="0.9"/><line x1="413.9" y1="213.10" x2="417.4" y2="213.10" stroke="#333" stroke-width="0.9"/><line x1="413.9" y1="248.12" x2="417.4" y2="248.12" stroke="#333" stroke-width="0.9"/><line x1="413.9" y1="283.15" x2="417.4" y2="283.15" stroke="#333" stroke-width="0.9"/><line x1="413.9" y1="318.17" x2="417.4" y2="318.17" stroke="#333" stroke-width="0.9"/><line x1="413.9" y1="353.20" x2="417.4" y2="353.20" stroke="#333" stroke-width="0.9"/><line x1="413.9" y1="388.23" x2="417.4" y2="388.23" stroke="#333" stroke-width="0.9"/><line x1="413.9" y1="423.25" x2="417.4" y2="423.25" stroke="#333" stroke-width="0.9"/><line x1="413.9" y1="458.27" x2="417.4" y2="458.27" stroke="#333" stroke-width="0.9"/><line x1="413.9" y1="493.30" x2="417.4" y2="493.30" stroke="#333" stroke-width="0.9"/><rect x="743.3" y="217.7" width="144.2" height="88.2" rx="2" fill="#fff" fill-opacity="0.85" stroke="#d5d5d5" stroke-width="0.9"/><line x1="746.6" y1="225.1" x2="766.2" y2="225.1" stroke="#000" stroke-opacity="0.75" stroke-width="0.65" stroke-dasharray="2.2 0.6"/><line x1="746.6" y1="239.4" x2="766.2" y2="239.4" stroke="#000" stroke-opacity="0.55" stroke-width="0.9"/><line x1="746.6" y1="253.6" x2="766.2" y2="253.6" stroke="#ff0000" stroke-opacity="0.45" stroke-width="0.9"/><line x1="746.6" y1="267.7" x2="766.2" y2="267.7" stroke="#ff0000" stroke-opacity="0.45" stroke-width="0.9"/><path d="M751.8000000000001 277.3L761.4 286.90000000000003M761.4 277.3L751.8000000000001 286.90000000000003" stroke="#ff0000" stroke-width="1.4"/><line x1="756.6" y1="291.3" x2="756.6" y2="301.3" stroke="#1f77b4" stroke-width="1.5"/><line x1="751.8000000000001" y1="291.3" x2="761.4" y2="291.3" stroke="#1f77b4" stroke-width="1.3"/><line x1="751.8000000000001" y1="301.3" x2="761.4" y2="301.3" stroke="#1f77b4" stroke-width="1.3"/><circle cx="756.6" cy="296.3" r="3.1" fill="#1f77b4"/></svg>
<div class="t" style="left:518.30px;top:128.70px;font-size:9.8px;color:#262626;font-family:'Liberation Sans',sans-serif;transform:scaleX(1.0265);transform-origin:0 0;-webkit-text-stroke:0;">Fit Type</div>
<div class="t" style="left:754.75px;top:128.70px;font-size:9.8px;color:#262626;font-family:'Liberation Sans',sans-serif;transform:scaleX(0.9328);transform-origin:0 0;-webkit-text-stroke:0;">FALLING</div>
<div class="t" style="left:517.55px;top:144.70px;font-size:9.8px;color:#262626;font-family:'Liberation Sans',sans-serif;transform:scaleX(1.0166);transform-origin:0 0;-webkit-text-stroke:0;">Fit Span</div>
<div class="t" style="left:763.50px;top:144.70px;font-size:9.8px;color:#262626;font-family:'Liberation Sans',sans-serif;transform:scaleX(1.0540);transform-origin:0 0;-webkit-text-stroke:0;">0.67</div>
<div class="t" style="left:497.40px;top:159.70px;font-size:9.8px;color:#262626;font-family:'Liberation Sans',sans-serif;transform:scaleX(1.0763);transform-origin:0 0;-webkit-text-stroke:0;">Included Data %</div>
<div class="t" style="left:760.75px;top:159.70px;font-size:9.8px;color:#262626;font-family:'Liberation Sans',sans-serif;transform:scaleX(1.0441);transform-origin:0 0;-webkit-text-stroke:0;">92.86</div>
<div class="t" style="left:519.10px;top:174.70px;font-size:9.8px;color:#262626;font-family:'Liberation Sans',sans-serif;transform:scaleX(0.9459);transform-origin:0 0;-webkit-text-stroke:0;">CPPOpt</div>
<div class="t" style="left:760.75px;top:174.70px;font-size:9.8px;color:#262626;font-family:'Liberation Sans',sans-serif;transform:scaleX(1.0441);transform-origin:0 0;-webkit-text-stroke:0;">77.34</div>
<div class="t" style="left:508.05px;top:189.70px;font-size:9.8px;color:#262626;font-family:'Liberation Sans',sans-serif;transform:scaleX(0.9536);transform-origin:0 0;-webkit-text-stroke:0;">CPPOpt_LLA</div>
<div class="t" style="left:760.75px;top:189.70px;font-size:9.8px;color:#262626;font-family:'Liberation Sans',sans-serif;transform:scaleX(1.0441);transform-origin:0 0;-webkit-text-stroke:0;">69.78</div>
<div class="t" style="left:507.10px;top:204.70px;font-size:9.8px;color:#262626;font-family:'Liberation Sans',sans-serif;transform:scaleX(0.9594);transform-origin:0 0;-webkit-text-stroke:0;">CPPOpt_ULA</div>
<div class="t" style="left:763.25px;top:204.70px;font-size:9.8px;color:#262626;font-family:'Liberation Sans',sans-serif;transform:scaleX(1.0802);transform-origin:0 0;-webkit-text-stroke:0;">84.9</div>
<div class="t" style="left:433.00px;top:504.70px;font-size:9.8px;color:#262626;font-family:'Liberation Sans',sans-serif;transform:scaleX(0.9360);transform-origin:0 0;-webkit-text-stroke:0;">40</div>
<div class="t" style="left:487.03px;top:504.70px;font-size:9.8px;color:#262626;font-family:'Liberation Sans',sans-serif;transform:scaleX(0.9360);transform-origin:0 0;-webkit-text-stroke:0;">50</div>
<div class="t" style="left:541.06px;top:504.70px;font-size:9.8px;color:#262626;font-family:'Liberation Sans',sans-serif;transform:scaleX(0.9360);transform-origin:0 0;-webkit-text-stroke:0;">60</div>
<div class="t" style="left:595.09px;top:504.70px;font-size:9.8px;color:#262626;font-family:'Liberation Sans',sans-serif;transform:scaleX(0.9360);transform-origin:0 0;-webkit-text-stroke:0;">70</div>
<div class="t" style="left:649.12px;top:504.70px;font-size:9.8px;color:#262626;font-family:'Liberation Sans',sans-serif;transform:scaleX(0.9360);transform-origin:0 0;-webkit-text-stroke:0;">80</div>
<div class="t" style="left:703.15px;top:504.70px;font-size:9.8px;color:#262626;font-family:'Liberation Sans',sans-serif;transform:scaleX(0.9360);transform-origin:0 0;-webkit-text-stroke:0;">90</div>
<div class="t" style="left:754.13px;top:504.70px;font-size:9.8px;color:#262626;font-family:'Liberation Sans',sans-serif;transform:scaleX(0.9972);transform-origin:0 0;-webkit-text-stroke:0;">100</div>
<div class="t" style="left:808.16px;top:504.70px;font-size:9.8px;color:#262626;font-family:'Liberation Sans',sans-serif;transform:scaleX(1.0435);transform-origin:0 0;-webkit-text-stroke:0;">110</div>
<div class="t" style="left:862.19px;top:504.70px;font-size:9.8px;color:#262626;font-family:'Liberation Sans',sans-serif;transform:scaleX(0.9972);transform-origin:0 0;-webkit-text-stroke:0;">120</div>
<div class="t" style="left:390.50px;top:213.70px;font-size:9.8px;color:#262626;font-family:'Liberation Sans',sans-serif;transform:scaleX(0.9858);transform-origin:0 0;-webkit-text-stroke:0;">1.00</div>
<div class="t" style="left:390.50px;top:248.70px;font-size:9.8px;color:#262626;font-family:'Liberation Sans',sans-serif;transform:scaleX(0.9858);transform-origin:0 0;-webkit-text-stroke:0;">0.75</div>
<div class="t" style="left:390.50px;top:283.70px;font-size:9.8px;color:#262626;font-family:'Liberation Sans',sans-serif;transform:scaleX(0.9858);transform-origin:0 0;-webkit-text-stroke:0;">0.50</div>
<div class="t" style="left:390.50px;top:318.70px;font-size:9.8px;color:#262626;font-family:'Liberation Sans',sans-serif;transform:scaleX(0.9858);transform-origin:0 0;-webkit-text-stroke:0;">0.25</div>
<div class="t" style="left:390.50px;top:353.70px;font-size:9.8px;color:#262626;font-family:'Liberation Sans',sans-serif;transform:scaleX(0.9858);transform-origin:0 0;-webkit-text-stroke:0;">0.00</div>
<div class="t" style="left:382.70px;top:388.70px;font-size:9.8px;color:#262626;font-family:'Liberation Sans',sans-serif;transform:scaleX(1.0728);transform-origin:0 0;-webkit-text-stroke:0;">−0.25</div>
<div class="t" style="left:382.70px;top:423.70px;font-size:9.8px;color:#262626;font-family:'Liberation Sans',sans-serif;transform:scaleX(1.0728);transform-origin:0 0;-webkit-text-stroke:0;">−0.50</div>
<div class="t" style="left:382.70px;top:458.70px;font-size:9.8px;color:#262626;font-family:'Liberation Sans',sans-serif;transform:scaleX(1.0728);transform-origin:0 0;-webkit-text-stroke:0;">−0.75</div>
<div class="t" style="left:382.70px;top:493.70px;font-size:9.8px;color:#262626;font-family:'Liberation Sans',sans-serif;transform:scaleX(1.0728);transform-origin:0 0;-webkit-text-stroke:0;">−1.00</div>
<div class="t" style="left:624.60px;top:517.70px;font-size:9.8px;color:#262626;font-family:'Liberation Sans',sans-serif;transform:scaleX(1.0228);transform-origin:0 0;-webkit-text-stroke:0;">CPP (mmHg)</div>
<div class="t" style="left:372.77px;top:363.20px;font-size:9.8px;color:#262626;transform:rotate(-90deg) scaleX(0.8751);transform-origin:0 0;-webkit-text-stroke:0">PRx</div>
<div class="t" style="left:773.70px;top:225.70px;font-size:9.8px;color:#262626;font-family:'Liberation Sans',sans-serif;transform:scaleX(1.0440);transform-origin:0 0;-webkit-text-stroke:0;">Fitted Parabola</div>
<div class="t" style="left:773.70px;top:239.70px;font-size:9.8px;color:#262626;font-family:'Liberation Sans',sans-serif;transform:scaleX(0.9431);transform-origin:0 0;-webkit-text-stroke:0;">CPPOpt</div>
<div class="t" style="left:773.70px;top:253.70px;font-size:9.8px;color:#262626;font-family:'Liberation Sans',sans-serif;transform:scaleX(0.8948);transform-origin:0 0;-webkit-text-stroke:0;">LLA</div>
<div class="t" style="left:773.70px;top:267.70px;font-size:9.8px;color:#262626;font-family:'Liberation Sans',sans-serif;transform:scaleX(0.9024);transform-origin:0 0;-webkit-text-stroke:0;">ULA</div>
<div class="t" style="left:773.70px;top:282.70px;font-size:9.8px;color:#262626;font-family:'Liberation Sans',sans-serif;transform:scaleX(1.0967);transform-origin:0 0;-webkit-text-stroke:0;">Excluded from curve fit</div>
<div class="t" style="left:773.70px;top:296.70px;font-size:9.8px;color:#262626;font-family:'Liberation Sans',sans-serif;transform:scaleX(0.9900);transform-origin:0 0;-webkit-text-stroke:0;">Data</div>
<div style="position:absolute;left:0px;top:540px;width:1024px;height:17px;background:#eee"></div>
<div class="t" style="left:18.50px;top:547.70px;font-size:9.6px;color:#333;font-family:'Liberation Sans',sans-serif;transform:scaleX(0.8962);transform-origin:0 0;">Simple</div>
<div style="position:absolute;left:49.2px;top:542.9px;width:22.8px;height:10.6px;background:#bdbdbd;border-radius:6px"></div>
<div style="position:absolute;left:50.3px;top:544.0px;width:8.4px;height:8.4px;background:#fff;border-radius:50%"></div>
<div class="t" style="left:89.63px;top:548.70px;font-size:9.6px;color:#333;font-family:'Liberation Sans',sans-serif;">0</div>
<div style="position:absolute;left:103.3px;top:544.0px;width:10.1px;height:9.8px;background:#424242;border-radius:1px"></div>
<div class="t" style="left:105.00px;top:549.70px;font-size:6.6px;color:#e8e8e8;font-family:'Liberation Sans',sans-serif;transform:scaleX(0.7630);transform-origin:0 0;">$</div>
<div style="position:absolute;left:108.3px;top:551.3px;width:2.8px;height:0.9px;background:#cfcfcf"></div>
<div class="t" style="left:119.83px;top:548.70px;font-size:9.6px;color:#333;font-family:'Liberation Sans',sans-serif;">5</div>
<svg style="left:133px;top:543.7px" width="9.2" height="9.0" viewBox="0 0 10 10" preserveAspectRatio="none"><rect x="1.75" y="1.75" width="6.5" height="6.5" rx="0.5" fill="none" stroke="#616161" stroke-width="1.25"/><rect x="3.7" y="3.7" width="2.6" height="2.6" fill="none" stroke="#616161" stroke-width="0.7"/><circle cx="5" cy="5" r="0.5" fill="#616161"/><path d="M3.8 0V1.6M6.2 0V1.6M3.8 8.4V10M6.2 8.4V10M0 3.8H1.6M0 6.2H1.6M8.4 3.8H10M8.4 6.2H10" stroke="#616161" stroke-width="1"/></svg>
<div class="t" style="left:155.30px;top:548.70px;font-size:9.6px;color:#333;font-family:'Liberation Sans',sans-serif;transform:scaleX(0.9652);transform-origin:0 0;">Python 3 (ipykernel) | Idle</div>
<div class="t" style="left:692.00px;top:548.70px;font-size:9.6px;color:#333;font-family:'Liberation Sans',sans-serif;transform:scaleX(0.9398);transform-origin:0 0;">Mode: Command</div>
<svg style="left:774.7px;top:542.9px" width="10.3" height="9.9" viewBox="0 0 10 10" preserveAspectRatio="none"><path d="M5 0.7C6.5 1.5 8 1.4 9.3 1.8C9.5 5.4 8.1 7.9 5 9.3C1.9 7.9 0.5 5.4 0.7 1.8C2 1.4 3.5 1.5 5 0.7Z" fill="none" stroke="#616161" stroke-width="1.15"/><path d="M3.4 3.2L6.6 6.4M6.6 3.2L3.4 6.4" stroke="#616161" stroke-width="1.05"/></svg>
<div class="t" style="left:797.40px;top:548.70px;font-size:9.6px;color:#333;font-family:'Liberation Sans',sans-serif;transform:scaleX(0.8788);transform-origin:0 0;">Ln 1, Col 1</div>
<div class="t" style="left:849.00px;top:548.70px;font-size:9.6px;color:#333;font-family:'Liberation Sans',sans-serif;transform:scaleX(0.9858);transform-origin:0 0;">06-Autoregulation-using-CPPOpt.ipynb</div>
<div style="position:absolute;left:0px;top:16.4px;width:297px;height:1.4px;background:#dfdfdf"></div>
<div style="position:absolute;left:1003px;top:16.4px;width:21px;height:1.4px;background:#dfdfdf"></div>
</div></body></html>
